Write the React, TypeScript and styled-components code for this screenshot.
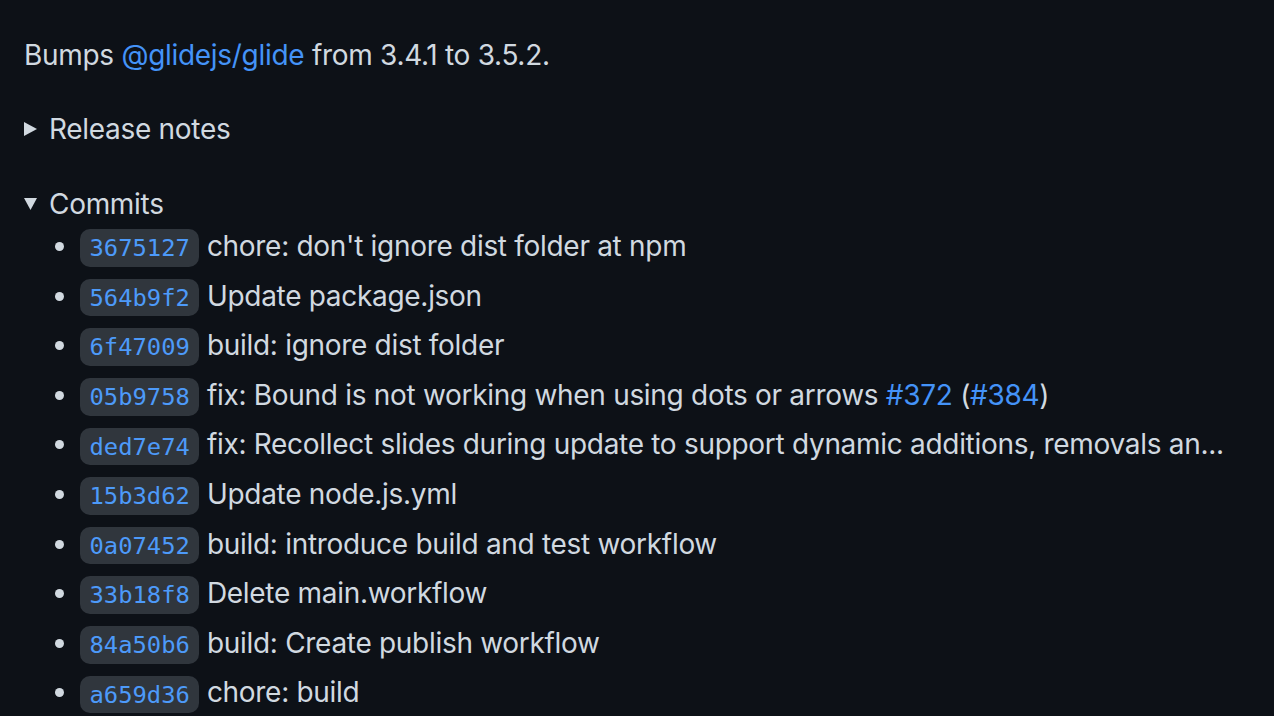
import React from "react";
import styled, { createGlobalStyle } from "styled-components";

const GlobalStyle = createGlobalStyle`
  html, body {
    margin: 0;
    padding: 0;
    background: #0d1117;
  }
  body {
    font-family: Inter, "Noto Sans", "Liberation Sans", sans-serif;
    color: #d1d9e0;
    -webkit-font-smoothing: antialiased;
  }
`;

const Markdown = styled.div`
  padding: 34px 24px 0;
  font-size: 28px;
  line-height: 42px;
  letter-spacing: -0.3px;
  height: 716px;
  box-sizing: border-box;
  overflow: hidden;
`;

const Paragraph = styled.p`
  margin: 0 0 32px;
`;

const Link = styled.a`
  color: #4493f8;
  text-decoration: none;
`;

const Details = styled.details`
  margin: 0 0 33px;
`;

const Summary = styled.summary`
  list-style: none;
  display: flex;
  align-items: center;
  gap: 12px;
  cursor: pointer;

  &::-webkit-details-marker {
    display: none;
  }
`;

const Marker = styled.svg`
  width: 13px;
  height: 14px;
  flex: none;
  fill: #d1d9e0;
`;

const CommitList = styled.ul`
  margin: 0;
  padding-left: 56px;
  display: flex;
  flex-direction: column;
  gap: 7.6px;
  list-style: disc;
`;

const CommitItem = styled.li`
  white-space: nowrap;
  height: 42px;
`;

const Sha = styled.code`
  font-family: "DejaVu Sans Mono", "Liberation Mono", monospace;
  font-size: 23.8px;
  line-height: 1;
  letter-spacing: 0;
  padding: 0.2em 0.4em;
  border-radius: 10px;
  background: #30363d;
  color: #4d9af9;
`;

type Commit = {
  sha: string;
  message: React.ReactNode;
};

const commits: Commit[] = [
  { sha: "3675127", message: "chore: don't ignore dist folder at npm" },
  { sha: "564b9f2", message: "Update package.json" },
  { sha: "6f47009", message: "build: ignore dist folder" },
  {
    sha: "05b9758",
    message: (
      <>
        fix: Bound is not working when using dots or arrows <Link href="#">#372</Link> (
        <Link href="#">#384</Link>)
      </>
    ),
  },
  {
    sha: "ded7e74",
    message: "fix: Recollect slides during update to support dynamic additions, removals an...",
  },
  { sha: "15b3d62", message: "Update node.js.yml" },
  { sha: "0a07452", message: "build: introduce build and test workflow" },
  { sha: "33b18f8", message: "Delete main.workflow" },
  { sha: "84a50b6", message: "build: Create publish workflow" },
  { sha: "a659d36", message: "chore: build" },
];

const Closed = () => (
  <Marker viewBox="0 0 13 14">
    <polygon points="0,0 13,7 0,14" />
  </Marker>
);

const Open = () => (
  <Marker viewBox="0 0 13 14">
    <polygon points="0,1 13,1 6.5,13" />
  </Marker>
);

export default function App() {
  return (
    <>
      <GlobalStyle />
      <Markdown>
        <Paragraph>
          Bumps <Link href="#">@glidejs/glide</Link> from 3.4.1 to 3.5.2.
        </Paragraph>
        <Details>
          <Summary>
            <Closed />
            Release notes
          </Summary>
        </Details>
        <Details open>
          <Summary>
            <Open />
            Commits
          </Summary>
          <CommitList>
            {commits.map((c) => (
              <CommitItem key={c.sha}>
                <Sha>{c.sha}</Sha> {c.message}
              </CommitItem>
            ))}
          </CommitList>
        </Details>
      </Markdown>
    </>
  );
}
